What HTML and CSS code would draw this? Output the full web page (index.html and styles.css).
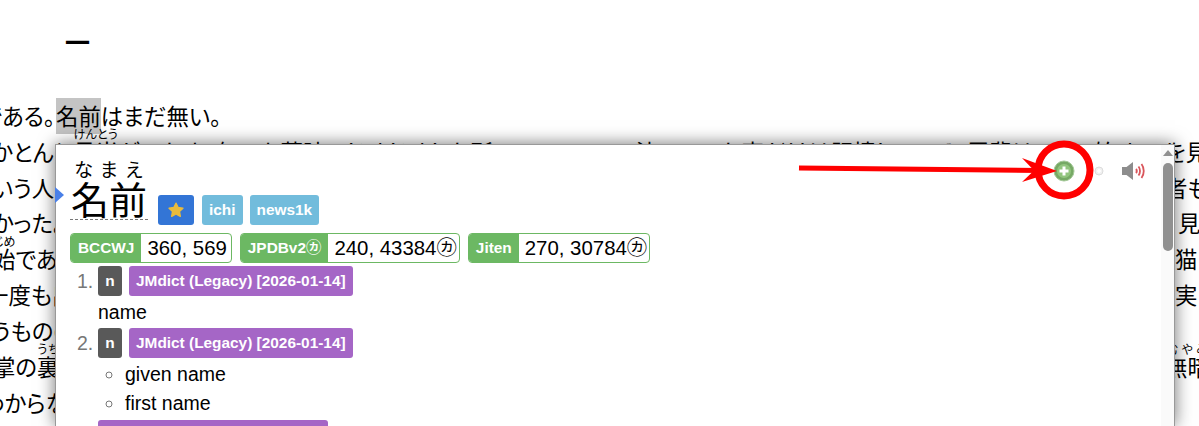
FILE: index.html
```html
<!DOCTYPE html>
<html lang="ja">
<head>
  <meta charset="UTF-8">
  <title>吾輩は猫である</title>
  <link rel="stylesheet" href="styles.css">
</head>
<body>
  <!-- article behind the popup -->
  <div class="article">
    <h1 class="chapter">一</h1>
    <div class="line l1"><span class="lead">吾輩は猫である。<span class="hit">名前</span>はまだ無い。</span></div>
    <div class="line ruby-line l2"><span class="lead">どこで生れたかとんと<ruby>見当<rt>けんとう</rt></ruby>がつかぬ。何でも薄暗いじめじめした所でニャーニャー泣いていた事だけは記憶している。吾輩はここで始めて人間というものを見た。しかもあとで聞くと</span><span class="tail">を見</span></div>
    <div class="line l3"><span class="lead">いう人間</span><span class="tail">者も</span></div>
    <div class="line l4"><span class="lead">かった。</span><span class="tail">見</span></div>
    <div class="line ruby-line l5"><span class="lead"><ruby>始<rt>じめ</rt></ruby>である</span><span class="tail">猫に</span></div>
    <div class="line l6"><span class="lead">一度も出</span><span class="tail">実に</span></div>
    <div class="line l7"><span class="lead">うものの</span></div>
    <div class="line ruby-line l8"><span class="lead">掌の<ruby>裏<rt>うち</rt></ruby></span><span class="tail"><ruby>無暗<rt>むやみ</rt></ruby></span></div>
    <div class="line l9"><span class="lead">わからな</span></div>
  </div>

  <!-- dictionary popup -->
  <div class="popup">
    <div class="popup-tail"></div>
    <div class="popup-body">
      <div class="entry-head">
        <ruby class="headword">名前<rt>なまえ</rt></ruby>
        <div class="tag tag-star">
          <svg width="18" height="18" viewBox="0 0 18 18"><path d="M9 2.2l2.1 4.4 4.8.6-3.5 3.3.9 4.8L9 12.9l-4.3 2.4.9-4.8-3.5-3.300 4.8-.6z" fill="#e9bb3c" stroke="#e9bb3c" stroke-width="1.5" stroke-linejoin="round"/></svg>
        </div>
        <div class="tag tag-blue">ichi</div>
        <div class="tag tag-blue">news1k</div>
        <div class="actions">
          <svg class="add-btn" width="22" height="22" viewBox="0 0 22 22">
            <circle cx="11" cy="11" r="10" fill="#76a965" stroke="#a5c999" stroke-width="1"/>
            <circle cx="11" cy="11" r="7" fill="#92c57e"/>
            <path d="M11 6.500v9M6.500 11h9" stroke="#fff" stroke-width="3"/>
          </svg>
          <svg class="dot-btn" width="10" height="10" viewBox="0 0 10 10">
            <circle cx="5" cy="5" r="4" fill="#f1f1f1" stroke="#dcdcdc"/>
            <path d="M5 3v4M3 5h4" stroke="#fff" stroke-width="1.500"/>
          </svg>
          <svg class="audio-btn" width="24" height="20" viewBox="0 0 24 20">
            <path d="M0 6h4.500L11 1v18l-6.500-5H0z" fill="#8d8d8d"/>
            <path d="M14 8c1 1 1 3 0 4" fill="none" stroke="#d9555b" stroke-width="2"/>
            <path d="M16.500 5.500c2 2.500 2 6.500 0 9" fill="none" stroke="#d9555b" stroke-width="1.800"/>
            <path d="M19.500 3c3 4 3 10 0 14" fill="none" stroke="#d9555b" stroke-width="1.800"/>
          </svg>
        </div>
      </div>

      <div class="freqs">
        <div class="freq"><span class="freq-name">BCCWJ</span><span class="freq-val freq-plain">360, 569</span></div>
        <div class="freq"><span class="freq-name">JPDBv2㋕</span><span class="freq-val">240, 43384㋕</span></div>
        <div class="freq"><span class="freq-name">Jiten</span><span class="freq-val">270, 30784㋕</span></div>
      </div>

      <div class="sense">
        <div class="sense-num">1.</div>
        <div class="sense-tags">
          <span class="tag tag-pos">n</span>
          <span class="tag tag-dict">JMdict (Legacy) [2026-01-14]</span>
        </div>
      </div>
      <div class="gloss">name</div>

      <div class="sense sense-next">
        <div class="sense-num">2.</div>
        <div class="sense-tags">
          <span class="tag tag-pos">n</span>
          <span class="tag tag-dict">JMdict (Legacy) [2026-01-14]</span>
        </div>
      </div>
      <ul class="gloss-list">
        <li>given name</li>
        <li>first name</li>
      </ul>
      <div class="next-tag"></div>
    </div>
    <div class="scrollbar">
      <div class="scroll-up"></div>
      <div class="scroll-thumb"></div>
    </div>
  </div>

  <!-- red arrow and ring drawn on top of the screenshot -->
  <svg class="markup" width="1199" height="426" viewBox="0 0 1199 426">
    <path d="M799 168L1040 170.500" stroke="#f00" stroke-width="5" fill="none"/>
    <path d="M1057 171L1022 158L1034 170.500L1022 182z" fill="#f00"/>
    <circle cx="1064" cy="170" r="26" stroke="#f00" stroke-width="7" fill="none"/>
  </svg>
</body>
</html>
```

FILE: styles.css
```css
* {
  margin: 0;
  padding: 0;
  box-sizing: border-box;
}

body {
  font-family: "Liberation Sans", "Noto Sans CJK JP", sans-serif;
  background: #fff;
  color: #000;
  height: 426px;
  overflow: hidden;
}

/* 背景の本文 */
.article {
  height: 426px;
  overflow: hidden;
  font-family: "Noto Sans CJK JP", sans-serif;
  font-size: 22.4px;
  font-feature-settings: "palt";
}

.chapter {
  font-size: 25px;
  line-height: 26px;
  font-weight: 700;
  height: 98px;
  padding: 28px 0 0 65px;
}

.line {
  display: flex;
  align-items: flex-end;
  height: 35.84px;
  line-height: 35.84px;
  white-space: nowrap;
  overflow: hidden;
}

/* ルビの分だけ行の上へはみ出させる */
.ruby-line {
  margin-top: -16px;
  height: 51.84px;
}

.lead {
  flex: 1;
  overflow: hidden;
  min-width: 0;
}

.tail {
  width: 34px;
  flex: none;
}

.article ruby {
  ruby-align: space-around;
}

.article rt {
  font-size: 12px;
  line-height: 20px;
}

.hit {
  display: inline-block;
  height: 36px;
  margin-left: 1px;
  background: #c4c4c4;
}

.l1 .lead { margin-left: -108px; }
.l2 .lead { margin-left: -135px; }
.l3 .lead { margin-left: -8px; }
.l4 .lead { margin-left: -8px; }
.l5 .lead { margin-left: -7px; }
.l6 .lead { margin-left: -14px; }
.l7 .lead { margin-left: -8px; }
.l8 .lead { margin-left: -7px; }
.l9 .lead { margin-left: -18px; }

.l2 .tail { margin-left: -9px; }
.l3 .tail { margin-left: -9px; }
.l4 .tail { padding-left: 13px; }
.l5 .tail { padding-left: 10px; }
.l6 .tail { padding-left: 10px; }

/* ポップアップ */
.popup {
  position: absolute;
  left: 55px;
  top: 144px;
  width: 1120px;
  height: 282px;
  background: #fff;
  border: 1px solid #999;
  border-bottom: none;
  box-shadow: 0 0 16px rgba(0, 0, 0, 0.55);
  display: flex;
}

.popup-tail {
  position: absolute;
  left: -1px;
  top: 42px;
  border-left: 9px solid #4a80e8;
  border-top: 8px solid transparent;
  border-bottom: 8px solid transparent;
}

.popup-body {
  flex: 1;
  padding: 13px 0 0 14px;
  min-width: 0;
  overflow: hidden;
}

.entry-head {
  display: flex;
  align-items: flex-end;
  height: 67px;
}

.headword {
  font-size: 38px;
  line-height: 38px;
  padding-bottom: 2px;
  margin-bottom: 5px;
  border-bottom: 1px dashed #777;
  font-family: "Noto Sans CJK JP", sans-serif;
  margin-right: 10px;
  width: 78px;
  text-align: center;
  ruby-align: space-around;
}

.headword rt {
  font-size: 19px;
  line-height: 20px;
}

.tag {
  display: inline-flex;
  align-items: center;
  justify-content: center;
  height: 30px;
  border-radius: 3px;
  color: #fff;
  font-size: 15.4px;
  font-weight: 700;
  padding: 0 7px;
}

.tag-star {
  width: 36px;
  background: #3375d6;
  margin-right: 8px;
}

.tag-blue {
  background: #72bcdc;
  margin-right: 7px;
}

.actions {
  margin-left: auto;
  margin-right: 15px;
  align-self: flex-start;
  display: flex;
  align-items: center;
  gap: 18px;
  margin-top: 2px;
}

.add-btn {
  margin-right: 1px;
}

.freqs {
  display: flex;
  gap: 8px;
  margin-top: 8px;
}

.freq {
  display: flex;
  height: 30px;
  border: 1px solid #6cb863;
  border-radius: 4px;
  overflow: hidden;
  line-height: 28px;
}

.freq-name {
  background: #6cb863;
  color: #fff;
  font-size: 15.4px;
  font-weight: 700;
  padding: 0 7px;
}

.freq-val {
  font-size: 20.4px;
  padding: 0 2px 0 6px;
}

.freq-plain {
  padding-right: 4px;
}

.sense {
  display: flex;
  align-items: center;
  margin-top: 3px;
}

.sense-next {
  margin-top: 0;
}

.sense-num {
  width: 28px;
  padding-left: 7px;
  font-size: 19.5px;
  color: #777;
}

.sense-tags {
  display: flex;
  gap: 7px;
}

.tag-pos {
  background: #595959;
  width: 24px;
  padding: 0;
}

.tag-dict {
  background: #a566c6;
}

.gloss {
  padding: 2px 0 0 28px;
  font-size: 19.5px;
  line-height: 29px;
  height: 32px;
}

.gloss-list {
  list-style: circle;
  padding-left: 55px;
  font-size: 19.5px;
  line-height: 29px;
  margin-top: 2px;
}

.gloss-list li::marker {
  color: #777;
}

.next-tag {
  width: 230px;
  height: 30px;
  margin: 2px 0 0 28px;
  background: #a566c6;
  border-radius: 3px;
}

.scrollbar {
  width: 13px;
  flex: none;
  background: #fafafa;
  display: flex;
  flex-direction: column;
  align-items: center;
}

.scroll-up {
  margin-top: 5px;
  border-left: 5px solid transparent;
  border-right: 5px solid transparent;
  border-bottom: 6px solid #909090;
}

.scroll-thumb {
  width: 10px;
  height: 88px;
  margin-top: 7px;
  background: #909090;
  border-radius: 5px;
}

.markup {
  position: absolute;
  left: 0;
  top: 0;
  pointer-events: none;
}
```
